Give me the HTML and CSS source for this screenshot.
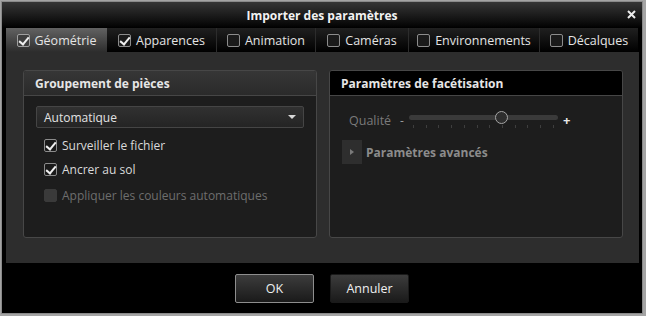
FILE: index.html
```html
<!DOCTYPE html>
<html lang="fr">
<head>
  <meta charset="UTF-8">
  <title>Importer des paramètres</title>
  <link rel="stylesheet" href="styles.css">
</head>
<body>
  <div class="dialog">
    <!-- Barre de titre -->
    <div class="titlebar">
      <span class="title">Importer des paramètres</span>
      <svg class="close" width="9" height="9" viewBox="0 0 9 9">
        <path d="M1 1 L8 8 M8 1 L1 8" stroke="#ececec" stroke-width="2"/>
      </svg>
    </div>

    <!-- Onglets -->
    <div class="tabs">
      <div class="tab tab-geo active"><span class="box checked"></span>Géométrie</div>
      <div class="tab tab-app"><span class="box checked"></span>Apparences</div>
      <div class="tab tab-anim"><span class="box"></span>Animation</div>
      <div class="tab tab-cam"><span class="box"></span>Caméras</div>
      <div class="tab tab-env"><span class="box"></span>Environnements</div>
      <div class="tab tab-dec last"><span class="box"></span>Décalques</div>
    </div>

    <!-- Contenu -->
    <div class="content">
      <div class="panel">
        <div class="panel-head">Groupement de pièces</div>
        <div class="panel-body">
          <div class="select">
            <span>Automatique</span>
            <span class="arrow"></span>
          </div>
          <label class="check"><span class="box checked"></span>Surveiller le fichier</label>
          <label class="check"><span class="box checked"></span>Ancrer au sol</label>
          <label class="check disabled"><span class="box"></span>Appliquer les couleurs automatiques</label>
        </div>
      </div>

      <div class="panel">
        <div class="panel-head dark">Paramètres de facétisation</div>
        <div class="panel-body">
          <div class="quality">
            <span class="q-label">Qualité</span>
            <span class="q-minus">-</span>
            <div class="slider">
              <div class="track"></div>
              <div class="thumb"></div>
              <div class="ticks">
                <i></i><i></i><i></i><i></i><i></i><i></i><i></i><i></i><i></i><i></i><i></i><i></i>
              </div>
            </div>
            <span class="q-plus">+</span>
          </div>
          <div class="advanced">
            <span class="expander"><span class="tri"></span></span>
            <span class="adv-label">Paramètres avancés</span>
          </div>
        </div>
      </div>
    </div>

    <!-- Boutons -->
    <div class="footer">
      <button class="btn default">OK</button>
      <button class="btn">Annuler</button>
    </div>
  </div>
</body>
</html>
```

FILE: styles.css
```css
/* Reset */
* {
  margin: 0;
  padding: 0;
  box-sizing: border-box;
}

body {
  width: 646px;
  height: 316px;
  background: #a4a4a4;
  font-family: 'Open Sans', 'Noto Sans', sans-serif;
  font-size: 12px;
  color: #e2e2e2;
  overflow: hidden;
}

/* Fenêtre */
.dialog {
  margin: 2px 0 0 2px;
  width: 640px;
  height: 311px;
  background: #000;
  display: flex;
  flex-direction: column;
  box-shadow: 0 0 0 1px #8a8a8a;
}

.titlebar {
  height: 26px;
  display: flex;
  align-items: center;
  justify-content: center;
  position: relative;
  background: linear-gradient(#363636, #0c0c0c 80%, #000);
}

.title {
  font-weight: 700;
  font-size: 12px;
  color: #f2f2f2;
}

.close {
  position: absolute;
  right: 6px;
  top: 8px;
}

/* Onglets */
.tabs {
  height: 24px;
  display: flex;
  padding-left: 4px;
}

.tab {
  display: flex;
  align-items: center;
  justify-content: center;
  gap: 5px;
  font-size: 12.5px;
  color: #e4e4e4;
  background: linear-gradient(#202020, #000);
  border-right: 1px solid #2c2c2c;
}

.tab-geo { width: 101px; }
.tab-app { width: 110px; }
.tab-anim { width: 99px; }
.tab-cam { width: 93px; }
.tab-env { width: 131px; }
.tab-dec { width: 98px; }

.tab.active {
  background: linear-gradient(#626262, #2d2d2d);
  border-right: none;
}

.tab.active .box {
  border-color: #a0a0a0;
  background: #3e3e3e;
}

.tab.last {
  border-right: none;
}

/* Case à cocher */
.box {
  width: 13px;
  height: 13px;
  border: 1px solid #8c8c8c;
  border-radius: 2px;
  background: #1a1a1a;
  position: relative;
  flex: none;
}

.box.checked::after {
  content: "";
  position: absolute;
  left: 3px;
  top: 0px;
  width: 4px;
  height: 8px;
  border: solid #f0f0f0;
  border-width: 0 2px 2px 0;
  transform: rotate(40deg);
}

/* Zone de contenu */
.content {
  height: 211px;
  margin: 0 3px 0 4px;
  background: #2d2d2d;
  padding: 18px 16px 25px 17px;
  display: flex;
  gap: 12px;
}

.panel {
  flex: 1;
  border: 1px solid #474747;
  border-radius: 3px;
  background: #1d1d1d;
  display: flex;
  flex-direction: column;
  overflow: hidden;
}

.panel-head {
  height: 25px;
  padding-left: 11px;
  display: flex;
  align-items: center;
  font-weight: 700;
  color: #e6e6e6;
  background: linear-gradient(#363636, #2a2a2a);
  border-bottom: 1px solid #464646;
}

.panel-head.dark {
  background: #000;
}

.panel-body {
  padding: 10px 12px;
}

/* Liste déroulante */
.select {
  height: 22px;
  border: 1px solid #454545;
  border-radius: 2px;
  background: linear-gradient(#313131, #242424);
  display: flex;
  align-items: center;
  justify-content: space-between;
  padding: 0 7px;
  margin-bottom: 11px;
}

.arrow {
  width: 0;
  height: 0;
  border-left: 4px solid transparent;
  border-right: 4px solid transparent;
  border-top: 4px solid #d8d8d8;
}

.check {
  display: flex;
  align-items: center;
  gap: 5px;
  height: 13px;
  margin: 0 0 11px 8px;
  color: #dadada;
}

.check.disabled {
  margin-top: 13px;
  color: #6e6e6e;
}

.check.disabled .box {
  border-color: #3a3a3a;
  background: #3a3a3a;
}

/* Curseur de qualité */
.quality {
  display: flex;
  align-items: center;
  height: 20px;
  margin: 4px 0 0 7px;
}

.q-label {
  color: #7a7a7a;
  font-size: 12.5px;
  width: 51px;
}

.q-minus {
  color: #9a9a9a;
  width: 9px;
}

.slider {
  position: relative;
  width: 149px;
  height: 20px;
}

.track {
  position: absolute;
  left: 0;
  right: 0;
  top: 5px;
  height: 5px;
  border-radius: 3px;
  background: #3a3a3a;
}

.thumb {
  position: absolute;
  left: 86px;
  top: 1px;
  width: 13px;
  height: 13px;
  border-radius: 50%;
  border: 1px solid #a6a6a6;
  background: #2e2e2e;
}

.ticks {
  position: absolute;
  left: 4px;
  right: 4px;
  top: 15px;
  display: flex;
  justify-content: space-between;
}

.ticks i {
  width: 1px;
  height: 3px;
  background: #3e3e3e;
}

.q-plus {
  margin-left: 5px;
  color: #e8e8e8;
  font-weight: 700;
  font-size: 13px;
}

/* Paramètres avancés */
.advanced {
  display: flex;
  align-items: center;
  gap: 4px;
  margin-top: 10px;
}

.expander {
  width: 20px;
  height: 24px;
  background: #2e2e2e;
  display: flex;
  align-items: center;
  justify-content: center;
}

.tri {
  width: 0;
  height: 0;
  border-top: 3px solid transparent;
  border-bottom: 3px solid transparent;
  border-left: 4px solid #7a7a7a;
}

.adv-label {
  font-weight: 700;
  color: #8c8c8c;
}

/* Pied de page */
.footer {
  flex: 1;
  display: flex;
  justify-content: center;
  align-items: flex-start;
  padding-top: 11px;
  gap: 16px;
}

.btn {
  width: 79px;
  height: 29px;
  font-family: inherit;
  font-size: 12.5px;
  color: #f0f0f0;
  border: 1px solid #1a1a1a;
  border-radius: 2px;
  background: linear-gradient(#3c3c3c, #1a1a1a);
}

.btn.default {
  border-color: #8e8e8e;
}
```
